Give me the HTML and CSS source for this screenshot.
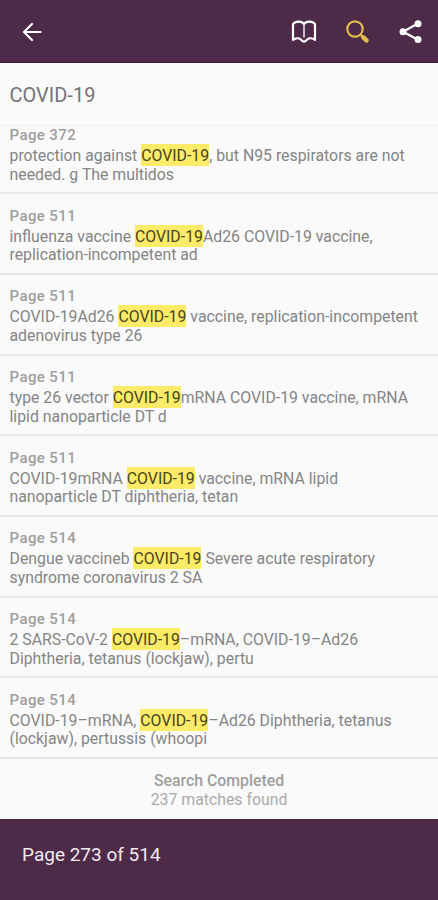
FILE: index.html
```html
<!DOCTYPE html>
<html lang="en">
<head>
<meta charset="utf-8">
<title>Search</title>
<link rel="stylesheet" href="styles.css">
</head>
<body>
<header class="bar">
  <svg class="back" viewBox="0 0 24 24"><path d="M20.500 12H4.500M12 4l-8 8 8 8"/></svg>
  <div class="actions">
    <svg class="book" viewBox="0 0 28 26"><path d="M14 5.200C12 1.800 5.500 1.500 3 5.200V20.800C5.500 19 9 18.800 10.800 20.500C12 21.600 12.500 22.600 14 22.600S16 21.600 17.200 20.500C19 18.800 22.500 19 25 20.800V5.200C22.500 1.500 16 1.800 14 5.200Z"/><path class="spine" d="M14 5.200V18.500"/></svg>
    <svg class="find" viewBox="0 0 26 26"><circle cx="10" cy="10" r="7.700"/><path class="neck" d="M15.500 15.500l3 3"/><path class="handle" d="M18.300 18.400l3.200 3"/></svg>
    <svg class="share" viewBox="0 0 26 26"><path d="M20 4.500L5 12.800l15 8"/><circle cx="20" cy="4.700" r="3.500"/><circle cx="5" cy="12.800" r="3.500"/><circle cx="20" cy="20.500" r="3.500"/></svg>
  </div>
</header>
<div class="query">COVID-19</div>
<main class="results">
  <article class="hit"><h2>Page 372</h2><p>protection against <mark>COVID-19</mark>, but N95 respirators are not<br>needed. g The multidos</p></article>
  <article class="hit"><h2>Page 511</h2><p>influenza vaccine <mark>COVID-19</mark>Ad26 COVID-19 vaccine,<br>replication-incompetent ad</p></article>
  <article class="hit"><h2>Page 511</h2><p>COVID-19Ad26 <mark>COVID-19</mark> vaccine, replication-incompetent<br>adenovirus type 26</p></article>
  <article class="hit"><h2>Page 511</h2><p>type 26 vector <mark>COVID-19</mark>mRNA COVID-19 vaccine, mRNA<br>lipid nanoparticle DT d</p></article>
  <article class="hit"><h2>Page 511</h2><p>COVID-19mRNA <mark>COVID-19</mark> vaccine, mRNA lipid<br>nanoparticle DT diphtheria, tetan</p></article>
  <article class="hit"><h2>Page 514</h2><p>Dengue vaccineb <mark>COVID-19</mark> Severe acute respiratory<br>syndrome coronavirus 2 SA</p></article>
  <article class="hit"><h2>Page 514</h2><p>2 SARS-CoV-2 <mark>COVID-19</mark>–mRNA, COVID-19–Ad26<br>Diphtheria, tetanus (lockjaw), pertu</p></article>
  <article class="hit"><h2>Page 514</h2><p>COVID-19–mRNA, <mark>COVID-19</mark>–Ad26 Diphtheria, tetanus<br>(lockjaw), pertussis (whoopi</p></article>
  <div class="summary"><strong>Search Completed</strong><span>237 matches found</span></div>
</main>
<footer class="pager">Page 273 of 514</footer>
</body>
</html>
```
FILE: styles.css
```css
* { box-sizing: border-box; }
body {
  margin: 0;
  height: 900px;
  display: flex;
  flex-direction: column;
  overflow: hidden;
  background: #fafafa;
  color: #858585;
  font-family: Roboto, sans-serif;
}
.bar {
  flex: none;
  height: 63px;
  padding: 2px 14px 0 20px;
  display: flex;
  align-items: center;
  justify-content: space-between;
  background: #4d2a47;
  border-bottom: 1px solid #3b1836;
}
.bar svg { display: block; fill: none; stroke: #fff; stroke-width: 2.2; }
.back { width: 24px; height: 24px; stroke-linecap: round; }
.actions { display: flex; align-items: center; gap: 27px; }
.book { width: 28px; height: 26px; stroke-linejoin: round; }
.spine { stroke-width: 1.800; stroke: #d9cdd8; }
.bar .find { width: 26px; height: 26px; stroke: #e0bc4c; }
.handle { stroke-width: 4.600; stroke-linecap: round; }
.bar .share { width: 26px; height: 26px; }
.share circle { fill: #fff; stroke: none; }
.query {
  flex: none;
  height: 63px;
  padding: 2px 9.500px 0;
  display: flex;
  align-items: center;
  border-bottom: 1px solid #f0f0f0;
  color: #757575;
  font-size: 20px;
}
.results {
  flex: none;
  height: 693px;
  overflow: hidden;
}
.hit {
  height: 80.7px;
  padding: 12.300px 9.500px 0;
  border-bottom: 2px solid #e9e9e9;
}
.hit:first-child { margin-top: -12.400px; }
.hit h2 {
  margin: 0;
  color: #9e9e9e;
  font-size: 15px;
  font-weight: 500;
  line-height: 18.700px;
  letter-spacing: .4px;
}
.hit p {
  margin: 2.300px 0 0;
  font-size: 15.840px;
  line-height: 18.700px;
  white-space: nowrap;
}
mark { padding: 2px 0 1px; background: #feeb67; color: #4a431f; }
.summary {
  padding-top: 12px;
  display: flex;
  flex-direction: column;
  align-items: center;
  color: #aaa;
  font-size: 15.840px;
  line-height: 19px;
}
.summary strong { color: #9e9e9e; font-weight: 500; }
.pager {
  flex: 1;
  padding: 24px 22px 0;
  background: #4d2a47;
  color: #f2e9f2;
  font-size: 19px;
  line-height: 23px;
}
```
